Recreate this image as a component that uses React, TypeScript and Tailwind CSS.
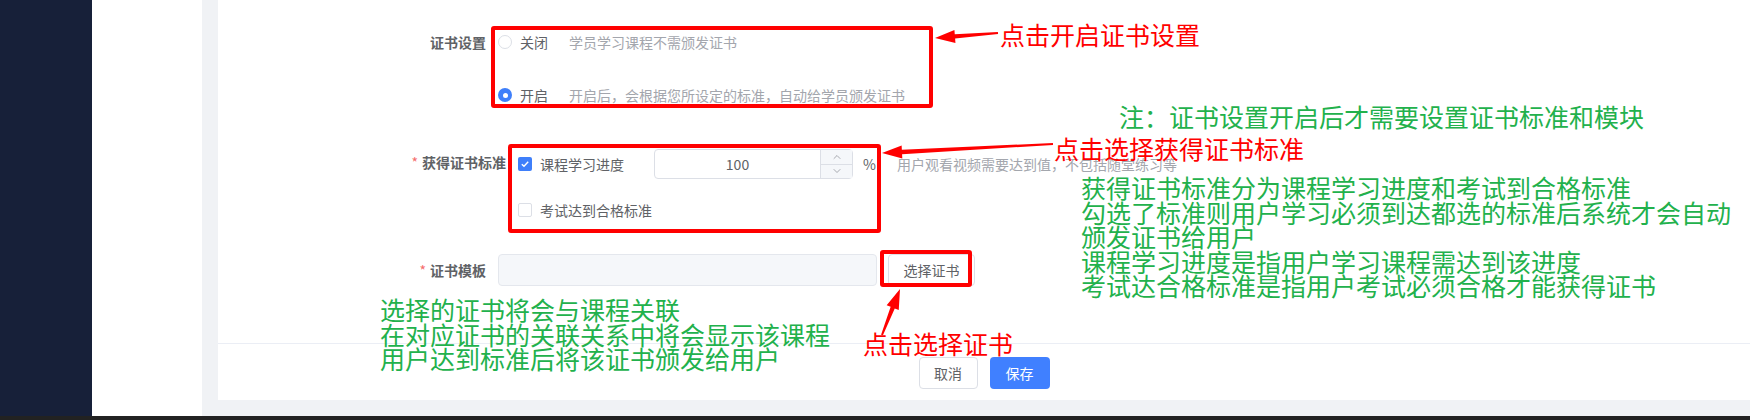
import React from "react";
import { ChevronDown, ChevronUp } from "lucide-react";

type Pt = [number, number];

// tapered paint-style arrow, tail -> head
function arrowPoints(tail: Pt, head: Pt, headLen = 20, headW = 6.5) {
  const [tx, ty] = tail;
  const [hx, hy] = head;
  const len = Math.hypot(hx - tx, hy - ty);
  const ux = (hx - tx) / len;
  const uy = (hy - ty) / len;
  const nx = -uy;
  const ny = ux;
  const bx = hx - ux * headLen;
  const by = hy - uy * headLen;
  const pts: Pt[] = [
    [tx + nx * 1, ty + ny * 1],
    [bx + nx * 2.2, by + ny * 2.2],
    [bx + nx * headW, by + ny * headW],
    [hx, hy],
    [bx - nx * headW, by - ny * headW],
    [bx - nx * 2.2, by - ny * 2.2],
    [tx - nx * 1, ty - ny * 1],
  ];
  return pts.map((p) => p.join(",")).join(" ");
}

function Radio({ checked, label, desc }: { checked?: boolean; label: string; desc: string }) {
  return (
    <div className="flex h-5 items-center">
      {checked ? (
        <span className="flex h-3.5 w-3.5 items-center justify-center rounded-full bg-[#3f7ffa]">
          <span className="h-[5px] w-[5px] rounded-full bg-white" />
        </span>
      ) : (
        <span className="h-3.5 w-3.5 rounded-full border border-[#dcdfe6] bg-white" />
      )}
      <span className="ml-2 text-[#606266]">{label}</span>
      <span className="ml-[21px] text-[#a3a6ad]">{desc}</span>
    </div>
  );
}

function Check({ checked }: { checked?: boolean }) {
  return checked ? (
    <span className="flex h-3.5 w-3.5 items-center justify-center rounded-[2px] bg-[#3f7ffa]">
      <svg viewBox="0 0 14 14" className="h-3.5 w-3.5">
        <path d="M3.8 7.2 L6 9.3 L10.2 4.8" fill="none" stroke="white" strokeWidth="1.4" />
      </svg>
    </span>
  ) : (
    <span className="h-3.5 w-3.5 rounded-[2px] border border-[#dcdfe6] bg-white" />
  );
}

function Annotations() {
  const arrows: [Pt, Pt][] = [
    [[998, 33], [935, 38]],
    [[1053, 144], [882, 153]],
    [[882, 335], [900, 289]],
  ];
  const green = "absolute text-[25px] leading-[24.5px] text-[#22b14c] whitespace-nowrap";
  const red = "absolute text-[25px] leading-[25px] text-[#ff0000] whitespace-nowrap";

  return (
    <div className="pointer-events-none absolute inset-0">
      {/* red boxes */}
      <div className="absolute left-[491px] top-[26px] h-[82px] w-[442px] rounded-[3px] border-4 border-[#ff0000]" />
      <div className="absolute left-[508px] top-[144px] h-[89px] w-[373px] rounded-[3px] border-4 border-[#ff0000]" />
      <div className="absolute left-[880px] top-[250px] h-[37px] w-[92px] rounded-[3px] border-4 border-[#ff0000]" />

      <svg className="absolute left-0 top-0" width="1750" height="420">
        {arrows.map(([t, h], i) => (
          <polygon key={i} points={arrowPoints(t, h)} fill="#ff0000" />
        ))}
      </svg>

      <div className={`${red} left-[1000px] top-[22px]`}>点击开启证书设置</div>
      <div className={`${green} left-[1119px] top-[104px]`}>注：证书设置开启后才需要设置证书标准和模块</div>
      <div className={`${red} left-[1054px] top-[136px]`}>点击选择获得证书标准</div>
      <div className={`${green} left-[1081px] top-[175px]`}>
        获得证书标准分为课程学习进度和考试到合格标准
        <br />
        勾选了标准则用户学习必须到达都选的标准后系统才会自动
        <br />
        颁发证书给用户
        <br />
        课程学习进度是指用户学习课程需达到该进度
        <br />
        考试达合格标准是指用户考试必须合格才能获得证书
      </div>
      <div className={`${green} left-[380px] top-[297px]`}>
        选择的证书将会与课程关联
        <br />
        在对应证书的关联关系中将会显示该课程
        <br />
        用户达到标准后将该证书颁发给用户
      </div>
      <div className={`${red} left-[863px] top-[331px]`}>点击选择证书</div>
    </div>
  );
}

export default function App() {
  return (
    <div className="relative flex h-[420px] w-[1750px] flex-col overflow-hidden bg-[#f0f2f5] font-['Noto_Sans_CJK_SC',sans-serif] text-sm">
      <div className="flex h-[416px]">
        <aside className="w-[92px] bg-[#172039]" />
        <nav className="w-[110px] bg-white" />
        <main className="flex flex-1 pb-4 pl-4">
          <section className="flex flex-1 flex-col bg-white">
            <div className="flex flex-col pt-8 text-[#606266]">
              {/* 证书设置 */}
              <div className="flex">
                <div className="w-[280px] pr-3 text-right font-bold leading-5">证书设置</div>
                <div className="flex flex-col gap-[33px]">
                  <Radio label="关闭" desc="学员学习课程不需颁发证书" />
                  <Radio checked label="开启" desc="开启后，会根据您所设定的标准，自动给学员颁发证书" />
                </div>
              </div>

              {/* 获得证书标准 */}
              <div className="mt-11 flex items-start">
                <div className="w-[300px] pr-3 text-right font-bold leading-[26px]">
                  <span className="mr-1 font-normal text-[#f56c6c]">*</span>获得证书标准
                </div>
                <div className="flex flex-col gap-[21px]">
                  <div className="flex h-[30px] items-center">
                    <Check checked />
                    <span className="ml-2">课程学习进度</span>
                    <div className="ml-[30px] flex h-[30px] w-[199px] rounded border border-[#dcdfe6] bg-white">
                      <div className="flex flex-1 items-center justify-center">100</div>
                      <div className="flex w-8 flex-col border-l border-[#dcdfe6] bg-[#f5f7fa] text-[#8c8f96]">
                        <div className="flex flex-1 items-center justify-center border-b border-[#dcdfe6]">
                          <ChevronUp size={12} strokeWidth={1.5} />
                        </div>
                        <div className="flex flex-1 items-center justify-center">
                          <ChevronDown size={12} strokeWidth={1.5} />
                        </div>
                      </div>
                    </div>
                    <span className="ml-[10px]">%</span>
                    <span className="ml-[21px] text-[#a3a6ad]">用户观看视频需要达到值，不包括随堂练习等</span>
                  </div>
                  <div className="flex h-5 items-center">
                    <Check />
                    <span className="ml-2">考试达到合格标准</span>
                  </div>
                </div>
              </div>

              {/* 证书模板 */}
              <div className="mt-[34px] flex items-center">
                <div className="w-[280px] pr-3 text-right font-bold">
                  <span className="mr-1 font-normal text-[#f56c6c]">*</span>证书模板
                </div>
                <div className="h-8 w-[379px] rounded border border-[#e4e7ed] bg-[#f5f7fa]" />
                <button className="ml-[11px] h-8 w-[87px] rounded border border-[#dcdfe6] bg-white text-[#606266]">
                  选择证书
                </button>
              </div>
            </div>

            <div className="flex-1" />

            <footer className="flex justify-center gap-3 border-t border-[#ebeef5] pb-[11px] pt-[13px]">
              <button className="h-8 w-[59px] rounded border border-[#dcdfe6] bg-white text-[#606266]">取消</button>
              <button className="h-8 w-[60px] rounded bg-[#4080ff] text-white">保存</button>
            </footer>
          </section>
        </main>
      </div>
      <div className="h-1 bg-[#222222]" />
      <Annotations />
    </div>
  );
}
